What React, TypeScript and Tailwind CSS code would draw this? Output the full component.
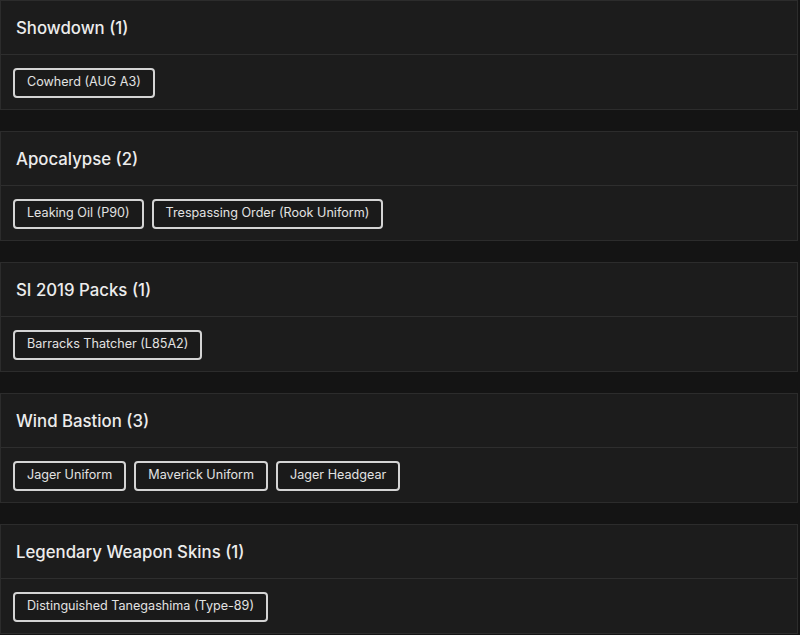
const sections = [
  { title: 'Showdown', items: ['Cowherd (AUG A3)'] },
  { title: 'Apocalypse', items: ['Leaking Oil (P90)', 'Trespassing Order (Rook Uniform)'] },
  { title: 'SI 2019 Packs', items: ['Barracks Thatcher (L85A2)'] },
  { title: 'Wind Bastion', items: ['Jager Uniform', 'Maverick Uniform', 'Jager Headgear'] },
  { title: 'Legendary Weapon Skins', items: ['Distinguished Tanegashima (Type-89)'] },
]

const App = () => {
  return (
    <div className="min-h-[635px] bg-[#141414] font-['Inter',sans-serif] flex flex-col gap-[21px]">
      {sections.map((s) => (
        <div key={s.title} className="bg-[#1c1c1c] border border-[#2c2c2c] mr-[2px]">
          <div className="h-[54px] flex items-center px-[15px] pt-[3px] border-b border-[#2e2e2e]">
            <span className="text-[16.8px] font-medium text-[#ececec]">
              {s.title} ({s.items.length})
            </span>
          </div>
          <div className="h-[54px] flex items-center gap-[8px] px-[12px] pt-[1px]">
            {s.items.map((item) => (
              <div
                key={item}
                className="h-[30px] flex items-center px-[12px] border-2 border-[#d4d4d4] rounded-[4px] bg-[#1a1a1a] text-[12.6px] text-[#e2e2e2]"
              >
                {item}
              </div>
            ))}
          </div>
        </div>
      ))}
    </div>
  )
}

export default App
